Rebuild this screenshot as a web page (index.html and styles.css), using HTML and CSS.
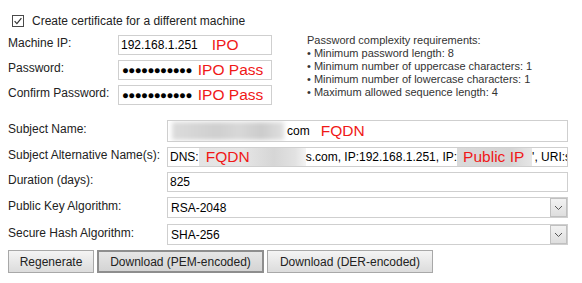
FILE: index.html
```html
<!DOCTYPE html>
<html>
<head>
<meta charset="utf-8">
<link rel="stylesheet" href="styles.css">
</head>
<body>
<div class="page">
  <div class="check-row">
    <span class="checkbox">
      <svg width="12" height="12" viewBox="0 0 12 12"><rect x="0.5" y="0.5" width="11" height="11" fill="#fff" stroke="#4a4a4a"/><path d="M2.6 6.2 L4.9 8.6 L9.4 3.2" fill="none" stroke="#333" stroke-width="1.2"/></svg>
    </span>
    <span>Create certificate for a different machine</span>
  </div>

  <div class="machine">
    <div class="fields1">
      <div class="row">
        <span class="label l1">Machine IP:</span>
        <div class="field f1"><span>192.168.1.251</span><span class="note n-ip">IPO</span></div>
      </div>
      <div class="row">
        <span class="label l1">Password:</span>
        <div class="field f1"><span class="dots">●●●●●●●●●●●</span><span class="note">IPO Pass</span></div>
      </div>
      <div class="row">
        <span class="label l1">Confirm Password:</span>
        <div class="field f1"><span class="dots">●●●●●●●●●●●</span><span class="note">IPO Pass</span></div>
      </div>
    </div>
    <div class="reqs">
      <div>Password complexity requirements:</div>
      <div>• Minimum password length: 8</div>
      <div>• Minimum number of uppercase characters: 1</div>
      <div>• Minimum number of lowercase characters: 1</div>
      <div>• Maximum allowed sequence length: 4</div>
    </div>
  </div>

  <div class="fields2">
    <div class="row r-subj">
      <span class="label l2">Subject Name:</span>
      <div class="field f2 tall"><span class="blur b-subj"></span><span>com</span><span class="note n-fqdn">FQDN</span></div>
    </div>
    <div class="row">
      <span class="label l2">Subject Alternative Name(s):</span>
      <div class="field f2"><span>DNS:</span><span class="mask m-fqdn"><span class="note">FQDN</span></span><span>s.com, IP:192.168.1.251, IP:</span><span class="mask m-ip"><span class="note">Public IP</span></span><span>', URI:s</span></div>
    </div>
    <div class="row">
      <span class="label l2">Duration (days):</span>
      <div class="field f2"><span>825</span></div>
    </div>
    <div class="row">
      <span class="label l2">Public Key Algorithm:</span>
      <div class="field f2 select"><span class="sel-text">RSA-2048</span><span class="arrow"><svg width="9" height="6" viewBox="0 0 9 6"><path d="M1 1 L4.5 4.5 L8 1" fill="none" stroke="#555" stroke-width="1"/></svg></span></div>
    </div>
    <div class="row">
      <span class="label l2">Secure Hash Algorithm:</span>
      <div class="field f2 select"><span class="sel-text">SHA-256</span><span class="arrow"><svg width="9" height="6" viewBox="0 0 9 6"><path d="M1 1 L4.5 4.5 L8 1" fill="none" stroke="#555" stroke-width="1"/></svg></span></div>
    </div>
  </div>

  <div class="buttons">
    <button class="btn b-regen">Regenerate</button>
    <button class="btn b-pem">Download (PEM-encoded)</button>
    <button class="btn b-der">Download (DER-encoded)</button>
  </div>
</div>
</body>
</html>
```

FILE: styles.css
```css
html, body {
  margin: 0;
  padding: 0;
  background: #fff;
}
body {
  font-family: "Liberation Sans", Arial, sans-serif;
  font-size: 12px;
  color: #222;
}
.page {
  padding: 14px 14px 0 8px;
}
.check-row {
  display: flex;
  align-items: center;
  height: 14px;
  padding-left: 4px;
  gap: 8px;
  font-size: 12px;
}
.checkbox {
  display: flex;
  width: 12px;
  height: 12px;
}
.machine {
  display: flex;
  margin-top: 7px;
}
.fields1 {
  display: flex;
  flex-direction: column;
  gap: 5px;
  width: 264px;
}
.row {
  display: flex;
  align-items: center;
}
.label {
  flex: none;
  margin-top: -4px;
}
.l1 { width: 110px; }
.l2 { width: 159px; }
.field {
  box-sizing: border-box;
  height: 20px;
  border: 1px solid #cfcfcf;
  background: #fff;
  display: flex;
  align-items: center;
  padding-left: 2px;
  color: #000;
  white-space: nowrap;
  overflow: hidden;
}
.field > * { flex: none; }
.f1 { width: 154px; }
.f2 { flex: 1; min-width: 0; }
.tall { height: 22px; }
.note {
  color: #f01818;
  font-size: 15.5px;
}
.n-ip { margin-left: 14px; }
.f1 .dots + .note { margin-left: 6px; }
.dots {
  font-size: 11.5px;
  letter-spacing: -0.6px;
  line-height: 14px;
  margin-left: 1px;
}
.reqs {
  margin-left: 35px;
  margin-top: -1px;
  font-size: 11px;
  line-height: 13px;
  color: #333;
}
.fields2 {
  display: flex;
  flex-direction: column;
  gap: 5px;
  margin-top: 15px;
}
.fields2 .row:nth-child(n+4) .field { height: 21px; }
.fields2 .row:nth-child(5) { margin-top: 1px; }
.blur {
  display: inline-block;
  height: 18px;
  background: #d6d6d6;
  filter: blur(2px);
}
.b-subj {
  width: 112px;
  margin-left: 2px;
  margin-right: 3px;
  background: linear-gradient(90deg, #dcdcdc, #cfcfcf 40%, #d8d8d8 60%, #cccccc 80%, #e0e0e0);
}
.n-fqdn { margin-left: 11px; }
.mask {
  display: inline-flex;
  align-items: center;
  height: 19px;
}
.m-fqdn {
  width: 107px;
  padding-left: 7px;
  box-sizing: border-box;
  background: linear-gradient(90deg, #e4e4e4, #e6e6e6 40%, #d6d6d6 70%, #e2e2e2 90%, #f4f4f4);
}
.m-ip {
  width: 75px;
  padding-left: 6px;
  box-sizing: border-box;
  background: linear-gradient(90deg, #dadada, #d4d4d4 70%, #e6e6e6);
}
.select {
  justify-content: space-between;
  padding-left: 0;
}
.sel-text {
  padding-left: 3px;
}
.arrow {
  box-sizing: border-box;
  width: 17px;
  height: 19px;
  border: 1px solid #c0c0c0;
  background: linear-gradient(#f2f2f2, #dedede);
  display: flex;
  align-items: center;
  justify-content: center;
}
.buttons {
  display: flex;
  gap: 3px;
  margin-top: 5px;
}
.btn {
  box-sizing: border-box;
  height: 23px;
  font-family: "Liberation Sans", Arial, sans-serif;
  font-size: 12px;
  color: #222;
  border: 1px solid #a8a8a8;
  background: linear-gradient(#f4f4f4, #dcdcdc);
  padding: 0;
  margin: 0;
}
.b-regen { width: 86px; }
.b-pem {
  width: 167px;
  border: 2px solid #8e8e8e;
  background: linear-gradient(#e6e6e6, #d4d4d4);
}
.b-der { width: 166px; }
```
